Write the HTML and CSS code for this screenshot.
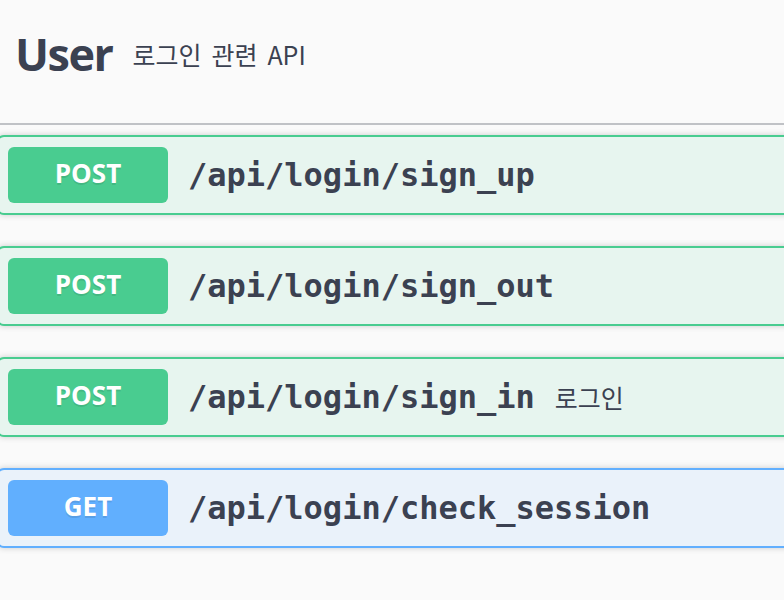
FILE: index.html
```html
<!DOCTYPE html>
<html lang="ko">
<head>
<meta charset="utf-8">
<title>User</title>
<link rel="stylesheet" href="styles.css">
</head>
<body>
<div class="wrap">
  <h3 class="tag-header">
    <span class="tag-name">User</span>
    <small class="tag-desc">로그인 관련 API</small>
  </h3>
  <div class="ops">
    <div class="op op-post">
      <span class="method">POST</span>
      <span class="path">/api/login/sign_up</span>
    </div>
    <div class="op op-post">
      <span class="method">POST</span>
      <span class="path">/api/login/sign_out</span>
    </div>
    <div class="op op-post">
      <span class="method">POST</span>
      <span class="path">/api/login/sign_in</span>
      <span class="desc">로그인</span>
    </div>
    <div class="op op-get">
      <span class="method">GET</span>
      <span class="path">/api/login/check_session</span>
    </div>
  </div>
</div>
</body>
</html>
```
FILE: styles.css
```css
html, body {
  margin: 0;
  padding: 0;
  background: #fafafa;
  overflow: hidden;
}

.wrap {
  margin-left: -4px;
  width: 820px;
  color: #3b4151;
}

.tag-header {
  display: flex;
  align-items: center;
  margin: 0 0 10px 0;
  padding: 24px 40px 39px 19px;
  border-bottom: 2px solid rgba(59, 65, 81, 0.3);
  font-weight: normal;
}

.tag-name {
  font-family: "Open Sans", "Noto Sans", sans-serif;
  font-weight: 700;
  font-size: 45px;
  line-height: 60px;
  letter-spacing: -1.5px;
}

.tag-desc {
  font-family: "Noto Sans CJK KR", "Noto Sans", sans-serif;
  font-size: 25px;
  line-height: 30px;
  word-spacing: 3px;
  padding: 0 20px;
  color: #3b4151;
}

.op {
  display: flex;
  align-items: center;
  margin: 0 0 31px 0;
  padding: 10px;
  border: 2px solid;
  border-radius: 8px;
  box-shadow: 0 0 6px rgba(0, 0, 0, 0.19);
}

.op-post {
  border-color: #49cc90;
  background: rgba(73, 204, 144, 0.1);
}

.op-get {
  border-color: #61affe;
  background: rgba(97, 175, 254, 0.1);
}

.method {
  width: 160px;
  height: 56px;
  box-sizing: border-box;
  padding-bottom: 4px;
  flex: none;
  display: flex;
  align-items: center;
  justify-content: center;
  border-radius: 6px;
  color: #fff;
  font-family: "Open Sans", "Noto Sans", sans-serif;
  font-weight: 700;
  font-size: 26px;
  text-shadow: 0 2px 0 rgba(0, 0, 0, 0.1);
}

.op-post .method { background: #49cc90; }
.op-get .method { background: #61affe; }

.path {
  padding: 0 20px;
  font-family: "DejaVu Sans Mono", "Liberation Mono", monospace;
  font-weight: 700;
  font-size: 32px;
  color: #3b4151;
}

.desc {
  font-family: "Noto Sans CJK KR", "Noto Sans", sans-serif;
  font-size: 25px;
  color: #3b4151;
}
```
